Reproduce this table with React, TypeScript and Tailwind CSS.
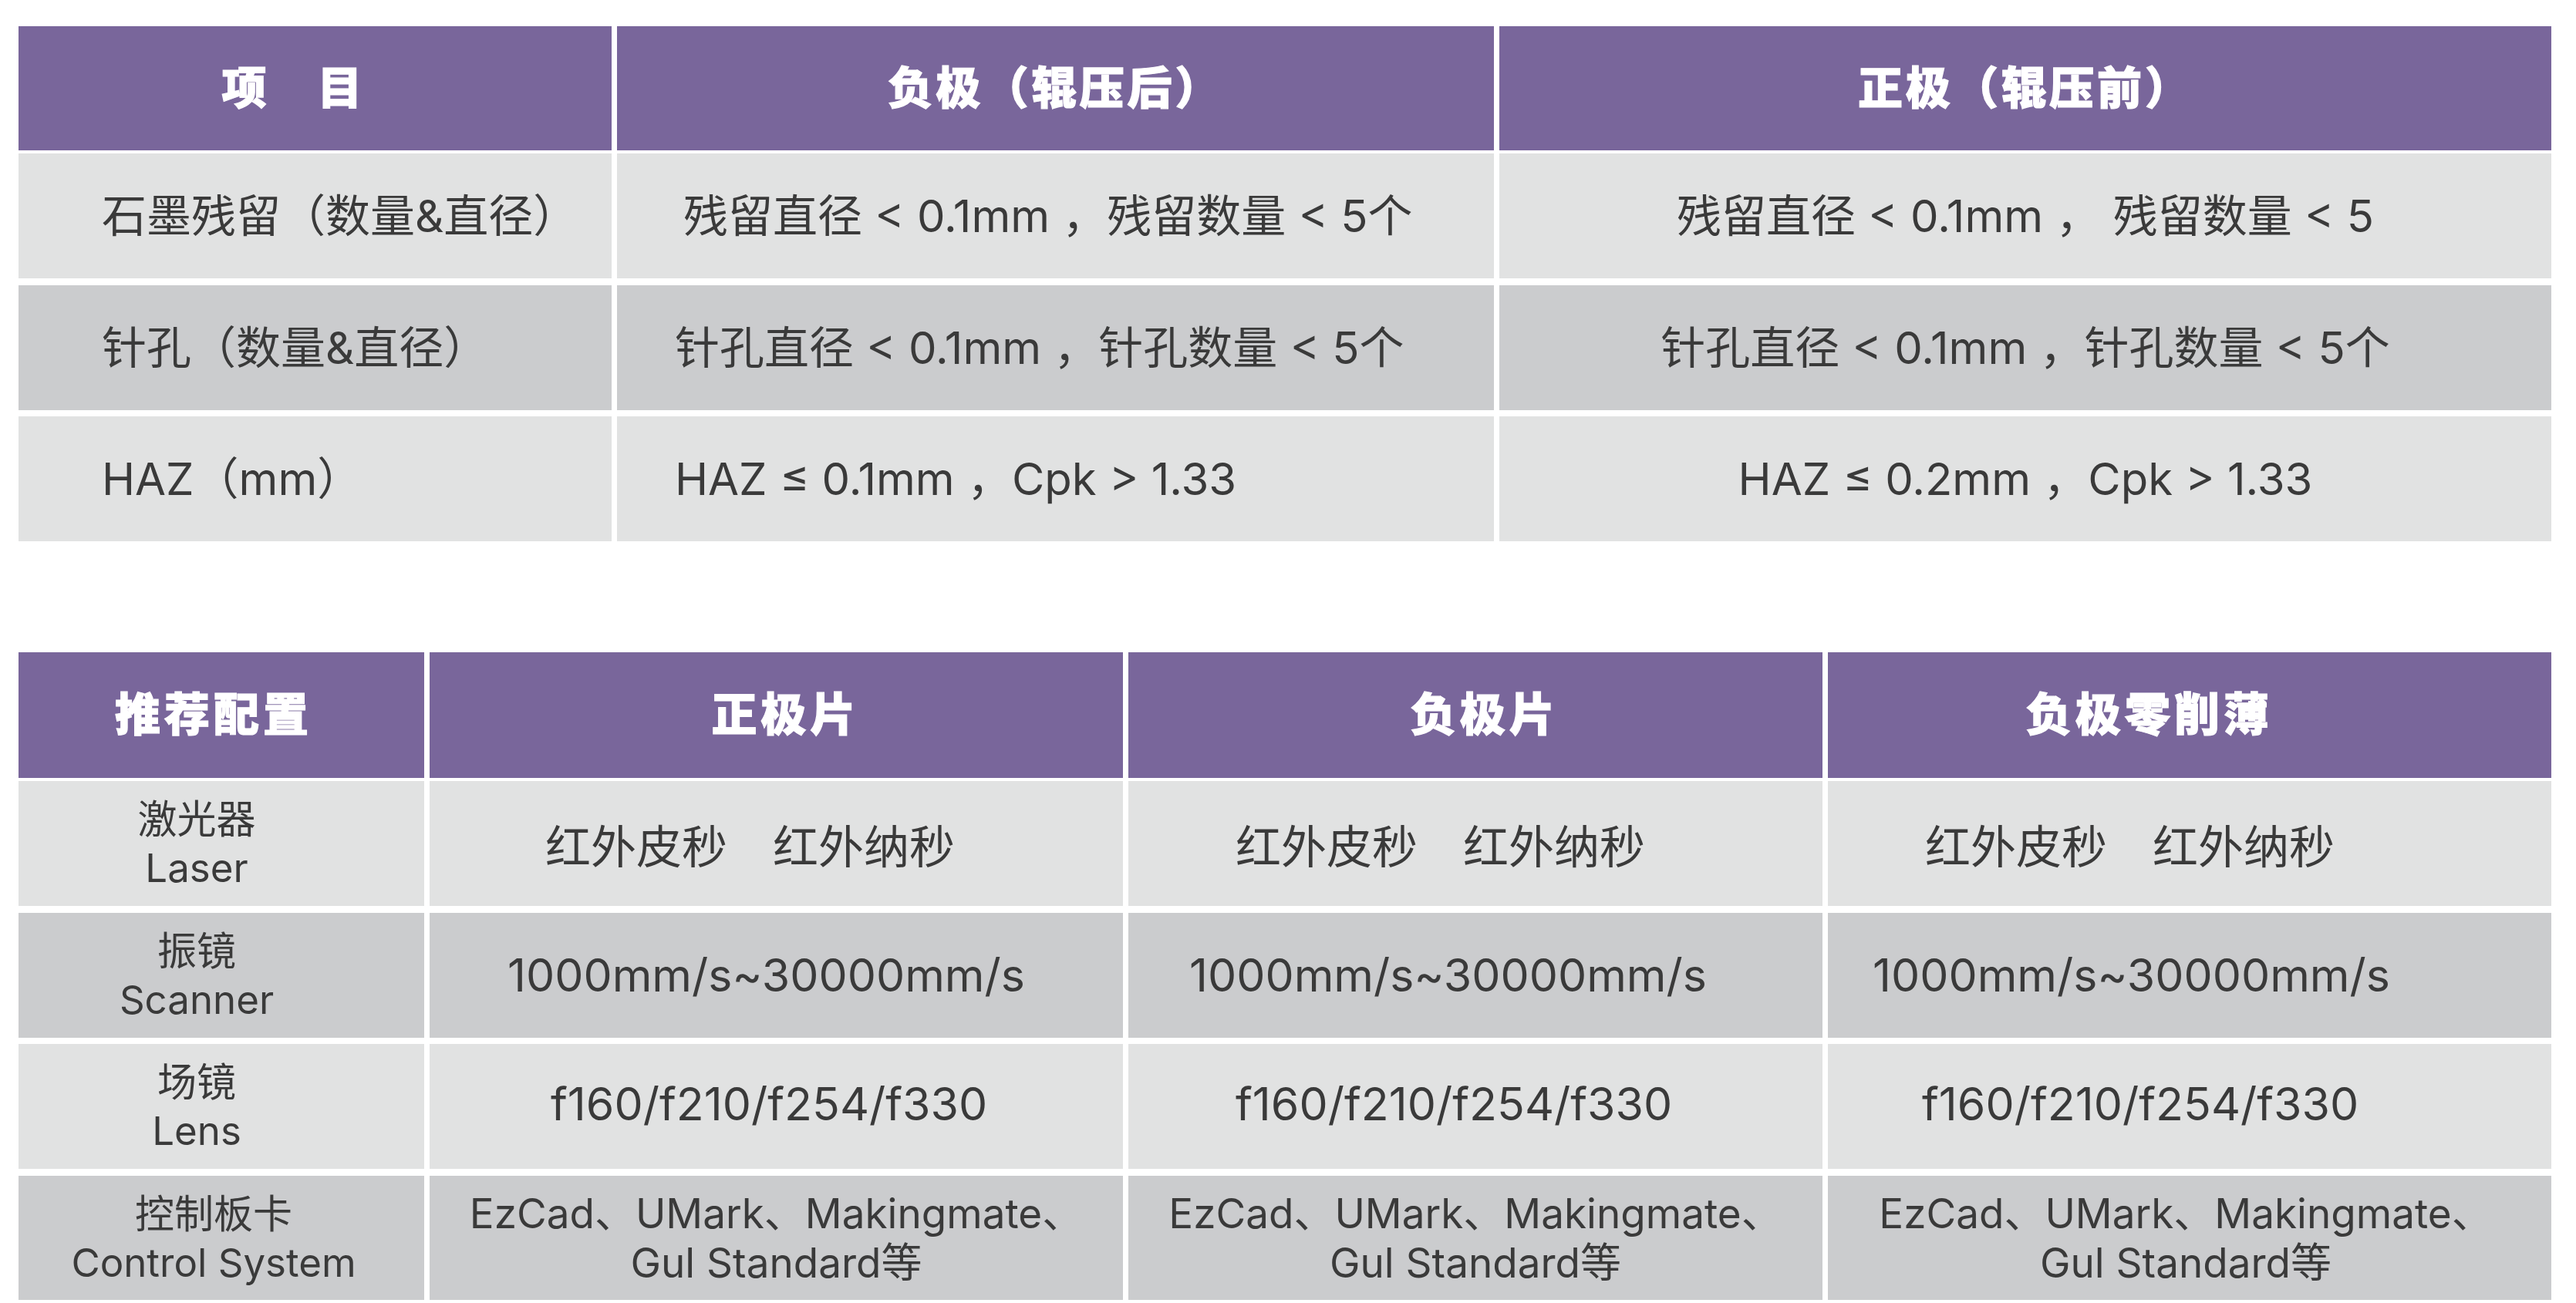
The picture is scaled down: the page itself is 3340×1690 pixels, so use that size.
const T1_COLS = "grid grid-cols-[769px_1137px_1364px] gap-x-[7px]";
const T2_COLS = "grid grid-cols-[526px_899px_900px_938px] gap-x-[7px]";

const head = "flex h-full items-center justify-center bg-[#79669b] font-black text-white [-webkit-text-stroke:1.2px_white]";
const light = "bg-[#e1e2e2]";
const dark = "bg-[#cbccce]";

type Cell = { text: React.ReactNode; cls?: string };

function Row({ cols, height, bg, cells, className = "" }: { cols: string; height: string; bg: string; cells: Cell[]; className?: string }) {
    return (
        <div className={`${cols} ${height} ${className}`}>
            {cells.map((c, i) => (
                <div key={i} className={`${bg} flex items-center ${c.cls ?? "justify-center"}`}>
                    {c.text}
                </div>
            ))}
        </div>
    );
}

function TwoLine({ a, b, lh = "leading-[63px]" }: { a: string; b: string; lh?: string }) {
    return (
        <div className={`flex flex-col items-center ${lh}`}>
            <span>{a}</span>
            <span>{b}</span>
        </div>
    );
}

const software = <TwoLine a="EzCad、UMark、Makingmate、" b="Gul Standard等" lh="leading-[64px]" />;

export default function App() {
    return (
        <div className="h-[1690px] w-[3340px] bg-white px-[24px] pt-[34px] font-['Inter','Noto_Sans_CJK_SC',sans-serif] text-[#3a3a3a]">
            {/* inspection table */}
            <div className="text-[58px]">
                <div className={`${T1_COLS} h-[161px] text-[58px] tracking-[4px]`}>
                    <div className={`${head} pr-[56px]`}>项　目</div>
                    <div className={head}>负极（辊压后）</div>
                    <div className={head}>正极（辊压前）</div>
                </div>
                <Row
                    cols={T1_COLS}
                    height="h-[162px]"
                    bg={light}
                    className="mt-[4px]"
                    cells={[
                        { text: "石墨残留（数量&直径）", cls: "justify-start pl-[108px]" },
                        { text: "残留直径 < 0.1mm ，残留数量 < 5个", cls: "justify-start pl-[86px]" },
                        { text: "残留直径 < 0.1mm ，  残留数量 < 5" },
                    ]}
                />
                <Row
                    cols={T1_COLS}
                    height="h-[162px]"
                    bg={dark}
                    className="mt-[9px]"
                    cells={[
                        { text: "针孔（数量&直径）", cls: "justify-start pl-[108px]" },
                        { text: "针孔直径 < 0.1mm ，针孔数量 < 5个", cls: "justify-start pl-[75px]" },
                        { text: "针孔直径 < 0.1mm ，针孔数量 < 5个" },
                    ]}
                />
                <Row
                    cols={T1_COLS}
                    height="h-[162px]"
                    bg={light}
                    className="mt-[8px]"
                    cells={[
                        { text: "HAZ（mm）", cls: "justify-start pl-[108px]" },
                        { text: "HAZ ≤ 0.1mm ，Cpk > 1.33", cls: "justify-start pl-[75px]" },
                        { text: "HAZ ≤ 0.2mm ，Cpk > 1.33" },
                    ]}
                />
            </div>

            {/* recommended configuration */}
            <div className="mt-[144px] text-[59px]">
                <div className={`${T2_COLS} h-[163px] text-[59px] tracking-[5px]`}>
                    <div className={`${head} pr-[20px]`}>推荐配置</div>
                    <div className={`${head} pl-[24px]`}>正极片</div>
                    <div className={`${head} pl-[24px]`}>负极片</div>
                    <div className={`${head} pr-[104px]`}>负极零削薄</div>
                </div>
                <Row
                    cols={T2_COLS}
                    height="h-[162px]"
                    bg={light}
                    className="mt-[4px]"
                    cells={[
                        { text: <TwoLine a="激光器" b="Laser" />, cls: "justify-center pr-[64px] text-[51px]" },
                        { text: "红外皮秒　红外纳秒", cls: "justify-start pl-[150px] pt-[10px]" },
                        { text: "红外皮秒　红外纳秒", cls: "justify-start pl-[139px] pt-[10px]" },
                        { text: "红外皮秒　红外纳秒", cls: "justify-start pl-[126px] pt-[10px]" },
                    ]}
                />
                <Row
                    cols={T2_COLS}
                    height="h-[162px]"
                    bg={dark}
                    className="mt-[9px]"
                    cells={[
                        { text: <TwoLine a="振镜" b="Scanner" />, cls: "justify-center pr-[64px] text-[51px]" },
                        { text: "1000mm/s~30000mm/s", cls: "justify-start pl-[101px]" },
                        { text: "1000mm/s~30000mm/s", cls: "justify-start pl-[79px]" },
                        { text: "1000mm/s~30000mm/s", cls: "justify-start pl-[58px]" },
                    ]}
                />
                <Row
                    cols={T2_COLS}
                    height="h-[162px]"
                    bg={light}
                    className="mt-[8px]"
                    cells={[
                        { text: <TwoLine a="场镜" b="Lens" />, cls: "justify-center pr-[64px] text-[51px]" },
                        { text: "f160/f210/f254/f330", cls: "justify-start pl-[157px] pb-[6px]" },
                        { text: "f160/f210/f254/f330", cls: "justify-start pl-[139px] pb-[6px]" },
                        { text: "f160/f210/f254/f330", cls: "justify-start pl-[122px] pb-[6px]" },
                    ]}
                />
                <Row
                    cols={T2_COLS}
                    height="h-[161px]"
                    bg={dark}
                    className="mt-[9px]"
                    cells={[
                        { text: <TwoLine a="控制板卡" b="Control System" />, cls: "justify-center pr-[20px] text-[51px]" },
                        { text: software, cls: "justify-center text-[53px]" },
                        { text: software, cls: "justify-center text-[53px]" },
                        { text: software, cls: "justify-center text-[53px] pr-[10px]" },
                    ]}
                />
            </div>
        </div>
    );
}
